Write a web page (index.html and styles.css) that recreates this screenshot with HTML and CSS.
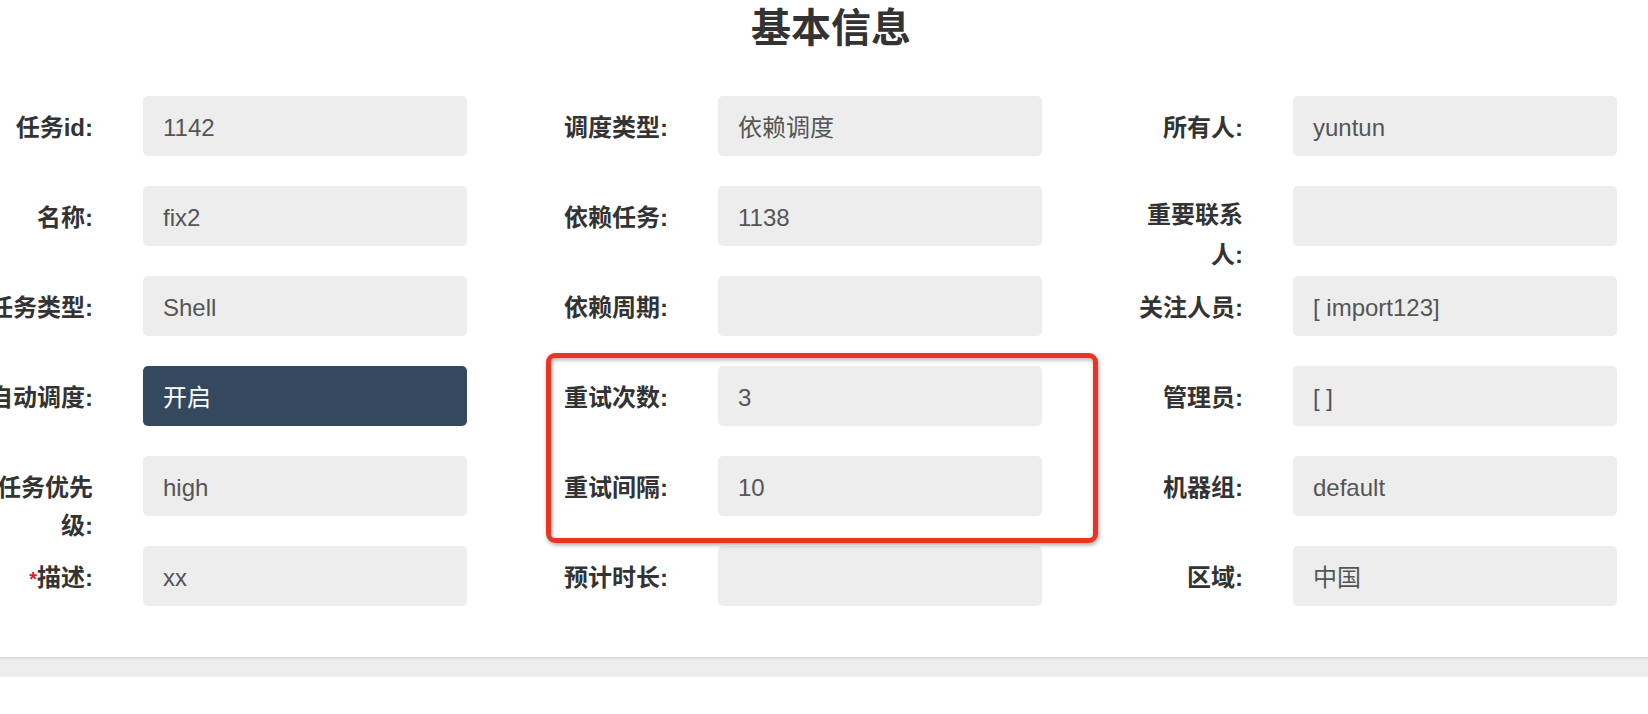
FILE: index.html
```html
<!DOCTYPE html>
<html lang="zh-CN">
<head>
<meta charset="utf-8">
<title>基本信息</title>
<link rel="stylesheet" href="styles.css">
</head>
<body>
<div class="page">
  <h2 class="title">基本信息</h2>
  <div class="form">
    <div class="field"><div class="lbl">任务id:</div><div class="val">1142</div></div>
    <div class="field"><div class="lbl">调度类型:</div><div class="val">依赖调度</div></div>
    <div class="field"><div class="lbl">所有人:</div><div class="val">yuntun</div></div>

    <div class="field"><div class="lbl">名称:</div><div class="val">fix2</div></div>
    <div class="field"><div class="lbl">依赖任务:</div><div class="val">1138</div></div>
    <div class="field"><div class="lbl lbl-wrap">重要联系人:</div><div class="val"></div></div>

    <div class="field"><div class="lbl">任务类型:</div><div class="val">Shell</div></div>
    <div class="field"><div class="lbl">依赖周期:</div><div class="val"></div></div>
    <div class="field"><div class="lbl">关注人员:</div><div class="val">[ import123]</div></div>

    <div class="field"><div class="lbl">自动调度:</div><div class="val val-dark">开启</div></div>
    <div class="field"><div class="lbl">重试次数:</div><div class="val">3</div></div>
    <div class="field"><div class="lbl">管理员:</div><div class="val">[ ]</div></div>

    <div class="field"><div class="lbl">任务优先级:</div><div class="val">high</div></div>
    <div class="field"><div class="lbl">重试间隔:</div><div class="val">10</div></div>
    <div class="field"><div class="lbl">机器组:</div><div class="val">default</div></div>

    <div class="field"><div class="lbl"><span class="req">*</span>描述:</div><div class="val">xx</div></div>
    <div class="field"><div class="lbl">预计时长:</div><div class="val"></div></div>
    <div class="field"><div class="lbl">区域:</div><div class="val">中国</div></div>

    <div class="highlight"></div>
  </div>
  <div class="bar"></div>
</div>
</body>
</html>
```
FILE: styles.css
```css
html, body {
  margin: 0;
  padding: 0;
  background: #fff;
}
body {
  width: 1648px;
  height: 714px;
  overflow: hidden;
  font-family: "Liberation Sans", "Noto Sans CJK SC", sans-serif;
  color: #333;
}
.page {
  display: flex;
  flex-direction: column;
}
.title {
  margin: 0 0 0 14px;
  height: 55px;
  line-height: 56px;
  font-size: 40px;
  font-weight: bold;
  text-align: center;
  color: #333;
}
.form {
  position: relative;
  margin-top: 41px;
  margin-left: -17px;
  display: grid;
  grid-template-columns: repeat(3, 484px);
  grid-auto-rows: 60px;
  column-gap: 91px;
  row-gap: 30px;
}
.field {
  display: flex;
  align-items: flex-start;
}
.lbl {
  width: 110px;
  flex: none;
  margin-right: 50px;
  padding-top: 13px;
  line-height: 38px;
  font-size: 24px;
  font-weight: bold;
  text-align: right;
  color: #333;
}
.lbl-wrap {
  padding-top: 9px;
  line-height: 40px;
}
.req {
  color: #e02020;
  font-size: 20px;
}
.val {
  width: 324px;
  height: 60px;
  flex: none;
  box-sizing: border-box;
  padding: 0 20px;
  border-radius: 5px;
  background: #ededed;
  font-size: 24px;
  line-height: 63px;
  color: #555;
}
.val-dark {
  background: #34495e;
  color: #fff;
}
.highlight {
  position: absolute;
  left: 563px;
  top: 257px;
  width: 552px;
  height: 190px;
  box-sizing: border-box;
  border: 5px solid #ea3323;
  border-radius: 9px;
  box-shadow: 1px 2px 4px rgba(0,0,0,0.35), inset 1px 2px 4px rgba(0,0,0,0.3);
}
.bar {
  margin-top: 51px;
  height: 20px;
  background: linear-gradient(#d6d6d6, #e6e6e6 2px, #ededed 4px);
}
```
